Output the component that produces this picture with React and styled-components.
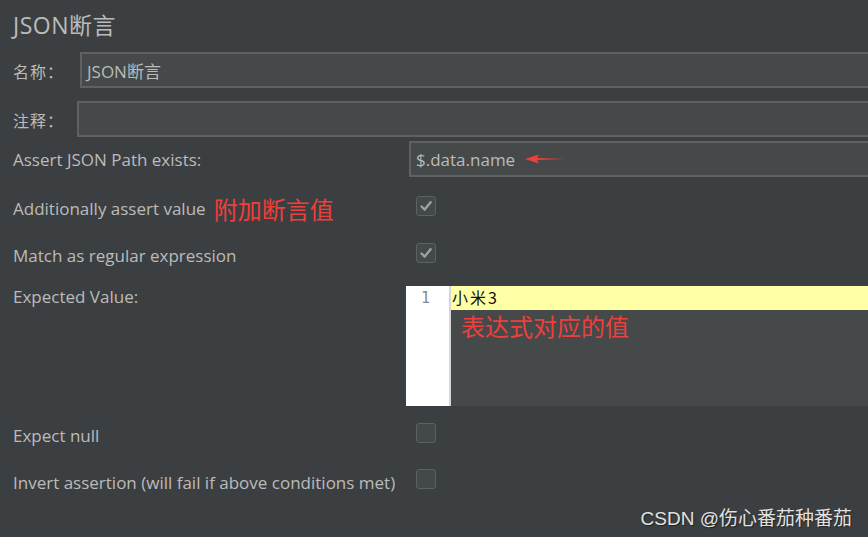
import React from "react";
import styled, { createGlobalStyle } from "styled-components";

const Global = createGlobalStyle`
  html, body { margin: 0; padding: 0; background: #3c3f41; overflow: hidden; }
  body { width: 868px; height: 537px; }
`;

const FONT = `"Open Sans", "Noto Sans CJK SC", sans-serif`;

const Page = styled.div`
  position: relative;
  width: 868px;
  height: 537px;
  overflow: hidden;
  background: #3c3f41;
  padding-left: 13px;
  box-sizing: border-box;
  font-family: ${FONT};
  color: #bbbbbb;
  display: flex;
  flex-direction: column;
`;

const Title = styled.div`
  height: 48px;
  display: flex;
  align-items: center;
  font-size: 23px;
  letter-spacing: 0.5px;
  font-family: "Open Sans", "Noto Sans CJK SC", sans-serif;
  color: #bbbbbb;
`;

const Row = styled.div`
  display: flex;
  align-items: ${(p) => p.$align || "center"};
  margin-top: ${(p) => p.$top}px;
  height: ${(p) => p.$h}px;
  margin-right: -20px;
`;

const CnLabel = styled.div`
  width: ${(p) => p.$w}px;
  flex: none;
  font-family: "Noto Sans CJK SC", sans-serif;
  font-size: 16px;
  letter-spacing: 1px;
  color: #bbbbbb;
  padding-top: 2px;
`;

const Label = styled.div`
  width: 393px;
  flex: none;
  font-size: 17px;
  color: #bbbbbb;
  display: flex;
  align-items: center;
  padding-top: ${(p) => p.$pt || 0}px;
  align-self: ${(p) => p.$self || "auto"};
`;

const Field = styled.div`
  flex: 1;
  height: 100%;
  box-sizing: border-box;
  background: #45494a;
  border: 2px solid #5f6263;
  border-right: none;
  margin-left: ${(p) => p.$ml || 0}px;
  display: flex;
  align-items: center;
  padding-left: 5px;
  font-size: 17px;
  color: #bbbbbb;
  font-family: "Open Sans", "Noto Sans CJK SC", sans-serif;
`;

const Note = styled.span`
  color: #ee3f3c;
  font-family: "Noto Sans CJK SC", sans-serif;
  font-size: ${(p) => p.$size || 24}px;
  margin-left: ${(p) => p.$ml || 0}px;
  line-height: 1.3;
`;

const Box = styled.div`
  width: 20px;
  height: 20px;
  box-sizing: border-box;
  border: 1px solid #5e6161;
  border-radius: 3px;
  background: #43494a;
  margin-left: 10px;
  display: flex;
  align-items: center;
  justify-content: center;
`;

const Editor = styled.div`
  flex: 1;
  height: 100%;
  display: flex;
`;

const Gutter = styled.div`
  background: #ffffff;
  border-right: 2px solid #d6d6d6;
  font-family: "DejaVu Sans Mono", monospace;
  font-size: 15px;
  color: #7f8a94;
  padding-left: 15px;
  box-sizing: border-box;
  width: 45px;
  padding-top: 1px;
  line-height: 22px;
`;

const Code = styled.div`
  flex: 1;
  background: #45494a;
  display: flex;
  flex-direction: column;
`;

const CurrentLine = styled.div`
  height: 24px;
  background: #ffffa5;
  color: #111;
  font-family: "Noto Sans CJK SC", sans-serif;
  font-size: 16px;
  letter-spacing: 2px;
  line-height: 23px;
  padding-left: 1px;
`;

const Watermark = styled.div`
  position: absolute;
  right: 16px;
  bottom: 7px;
  font-family: "Liberation Sans", "Noto Sans CJK SC", sans-serif;
  font-size: 19px;
  color: #e2e2e2;
  text-shadow: 1px 1px 1px #1f2022;
`;

const Check = () => (
  <svg width="14" height="14" viewBox="0 0 14 14">
    <path d="M2.5 7.5 L5.7 10.6 L11.6 3.2" fill="none" stroke="#a0a0a0" strokeWidth="2.4" strokeLinecap="round" strokeLinejoin="round" />
  </svg>
);

const Arrow = () => (
  <svg width="40" height="10" viewBox="0 0 40 10" style={{ marginLeft: 10 }}>
    <path d="M0 5 L14 0.5 L12 4 L40 5 L12 6 L14 9.5 Z" fill="#ee3f3c" />
  </svg>
);

export default function App() {
  return (
    <>
      <Global />
      <Page>
        <Title>JSON断言</Title>
        <Row $top={4} $h={36}>
          <CnLabel $w={67}>名称：</CnLabel>
          <Field>JSON断言</Field>
        </Row>
        <Row $top={13} $h={36}>
          <CnLabel $w={64}>注释：</CnLabel>
          <Field />
        </Row>
        <Row $top={4} $h={36}>
          <Label>Assert JSON Path exists:</Label>
          <Field $ml={3}>
            $.data.name
            <Arrow />
          </Field>
        </Row>
        <Row $top={9} $h={40}>
          <Label $pt={5}>
            Additionally assert value<Note $ml={8}>附加断言值</Note>
          </Label>
          <Box><Check /></Box>
        </Row>
        <Row $top={7} $h={40}>
          <Label $pt={5}>Match as regular expression</Label>
          <Box><Check /></Box>
        </Row>
        <Row $top={13} $h={120} $align="stretch">
          <Label $self="flex-start" $pt={0} style={{ height: 21 }}>Expected Value:</Label>
          <Editor>
            <Gutter>1</Gutter>
            <Code>
              <CurrentLine>小米3</CurrentLine>
              <Note $ml={10}>表达式对应的值</Note>
            </Code>
          </Editor>
        </Row>
        <Row $top={7} $h={40}>
          <Label $pt={5}>Expect null</Label>
          <Box />
        </Row>
        <Row $top={6} $h={40}>
          <Label $pt={7}>Invert assertion (will fail if above conditions met)</Label>
          <Box />
        </Row>
        <Watermark>CSDN @伤心番茄种番茄</Watermark>
      </Page>
    </>
  );
}
